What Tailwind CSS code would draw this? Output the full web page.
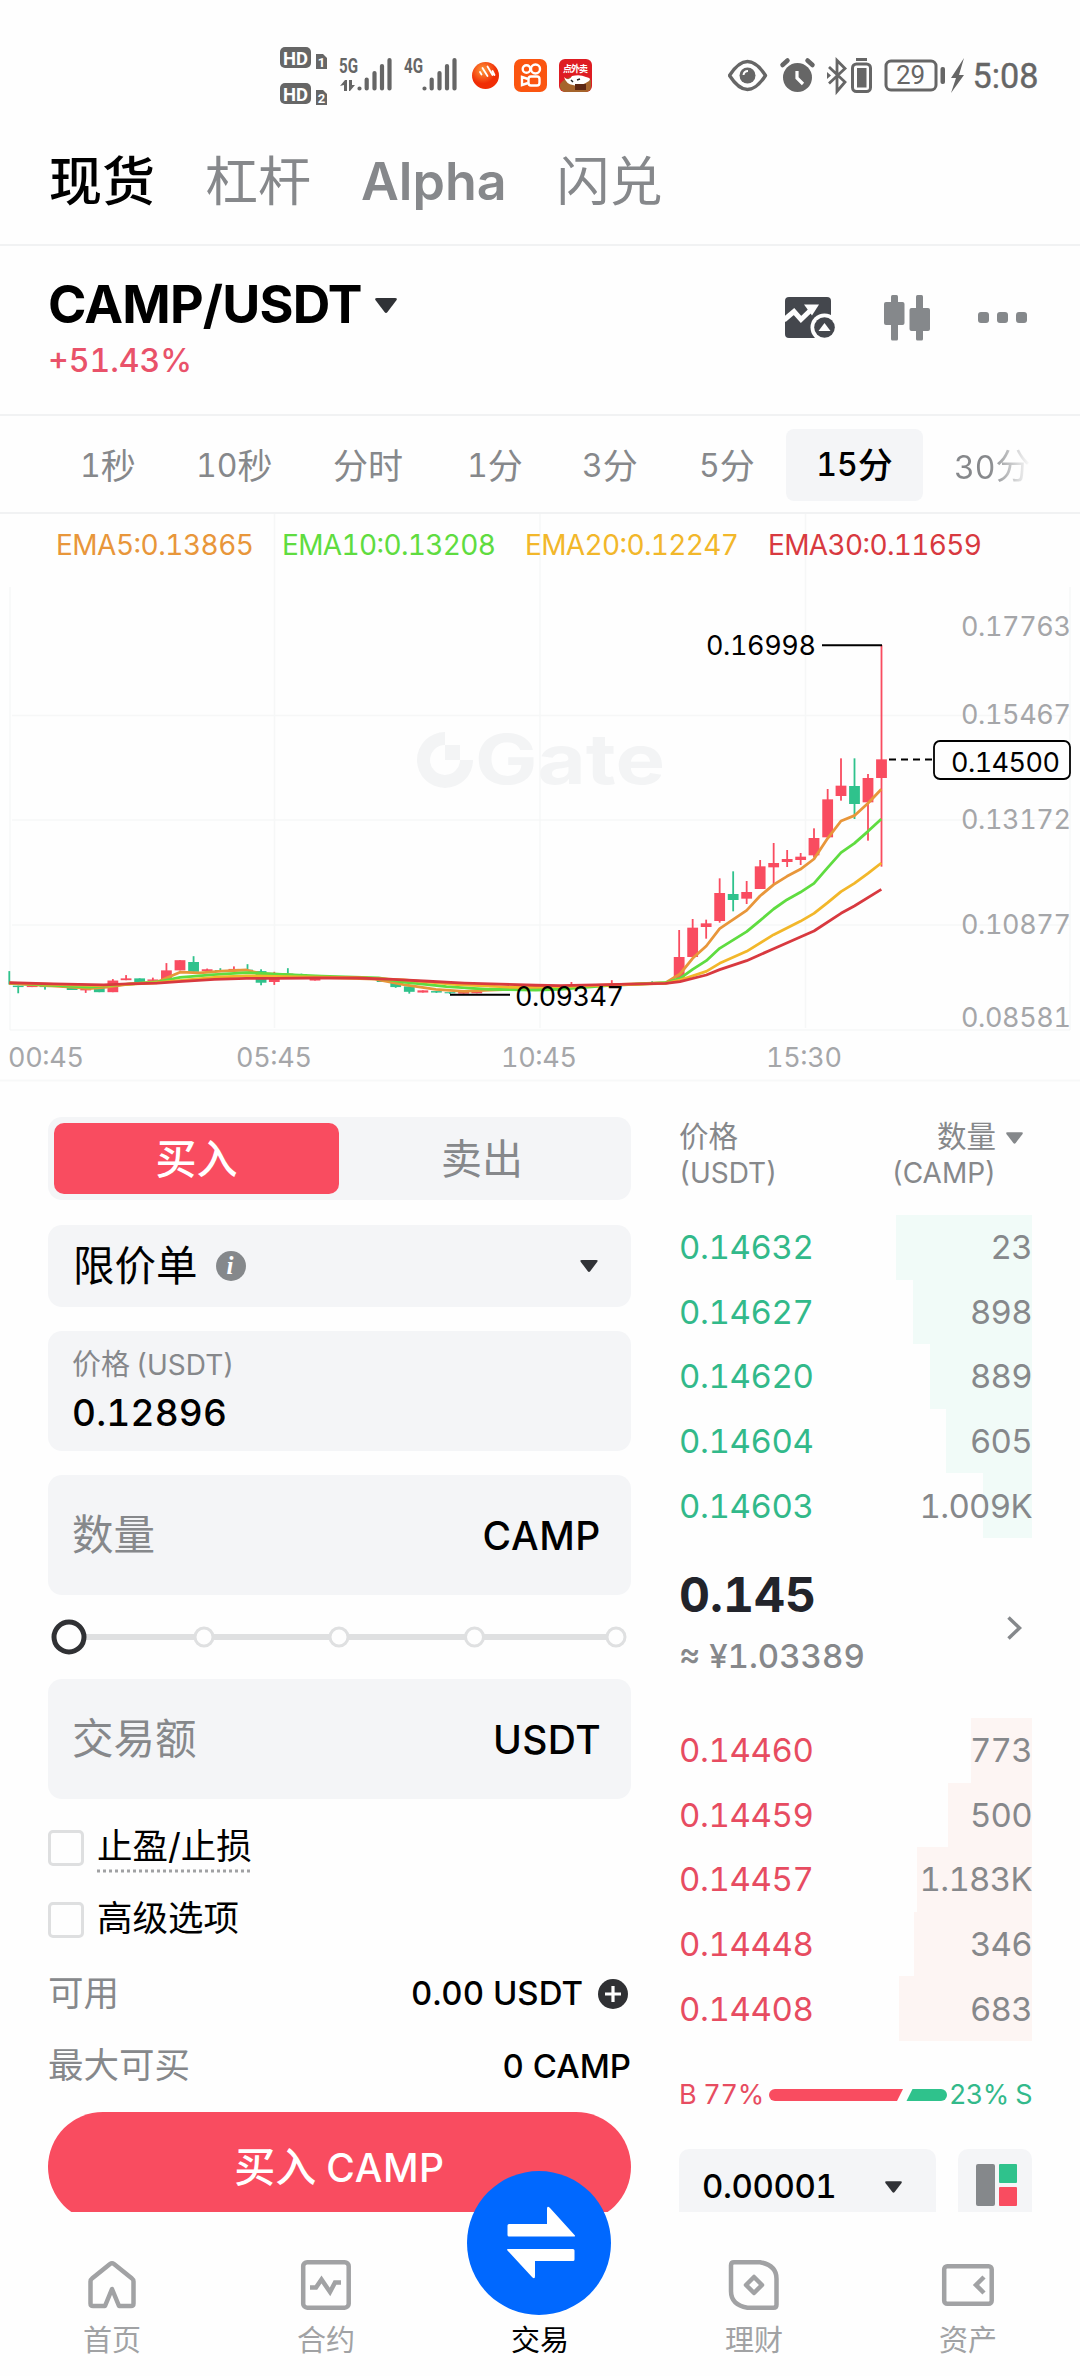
<!DOCTYPE html>
<html lang="zh-CN">
<head>
<meta charset="utf-8">
<title>CAMP/USDT</title>
<script src="https://cdn.jsdelivr.net/npm/@tailwindcss/browser@4"></script>
</head>
<body class="bg-[#fefefe]">
<div class="w-[1080px] h-[2376px] overflow-hidden flex flex-col bg-[#fefefe] text-black tabular-nums leading-none whitespace-nowrap font-['Inter','Noto_Sans_CJK_SC',sans-serif]">

  <!-- status bar -->
  <header class="h-[118px] shrink-0 pt-8 pl-[280px] pr-[38px] flex items-center justify-between">
    <svg width="313" height="60" viewBox="280 45 313 60" fill="#666">
      <rect x="280" y="47" width="31" height="21" rx="5"/><rect x="280" y="83" width="31" height="21" rx="5"/>
      <path d="M316 54h7l4 4v11h-11z"/><path d="M316 90h7l4 4v11h-11z"/>
      <g fill="#fff" font-family="Roboto" font-weight="700" font-size="19">
        <text x="283" y="64.500" textLength="25" lengthAdjust="spacingAndGlyphs">HD</text><text x="283" y="100.500" textLength="25" lengthAdjust="spacingAndGlyphs">HD</text>
        <text x="317.800" y="67" font-size="13">1</text><text x="317.800" y="103" font-size="13">2</text>
      </g>
      <g font-family="Roboto" font-weight="700" font-size="20">
        <text x="339" y="72.500" textLength="19" lengthAdjust="spacingAndGlyphs">5G</text><text x="404" y="72.500" textLength="19" lengthAdjust="spacingAndGlyphs">4G</text>
      </g>
      <path d="M340 86l5-6h2v11h-3v-6zM349 80h3v5h3l-5 6h-1z"/>
      <g stroke="#666" stroke-width="4.200" stroke-linecap="round">
        <path d="M359.500 88.500v0M366.700 79.500v9M374.500 73v15.500M382 66v22.500M389.500 60v28.500"/>
        <path d="M424.500 88.500v0M431.700 79.500v9M439.500 73v15.500M447 66v22.500M454.500 60v28.500"/>
      </g>
      <defs><radialGradient id="o" cx=".4" cy=".3"><stop stop-color="#ff9a3c"/><stop offset="1" stop-color="#f02d05"/></radialGradient></defs>
      <circle cx="485.500" cy="75.500" r="13.500" fill="url(#o)"/>
      <path d="M480 72l1.500 2.500M482.500 68l5 8M487.500 66.500l5 8.500M492.500 71l2 4" stroke="#fff" stroke-width="1.800" stroke-linecap="round"/>
      <rect x="514" y="59" width="33" height="33" rx="7" fill="#fb5510"/>
      <g fill="none" stroke="#fff" stroke-width="2.400"><circle cx="526.500" cy="69" r="3.800"/><circle cx="535.500" cy="69" r="4.500"/><rect x="528.500" y="76.500" width="11" height="9" rx="2.500"/><path d="M528 79l-6-2v8l6-2"/></g>
      <rect x="559" y="59" width="33" height="33" rx="6" fill="#de1c22"/>
      <path d="M560 84q6-8 14-7t17 3v6q0 6-6 6h-19q-5 0-6-5z" fill="#a5642c"/>
      <path d="M564 77q5 5 8-1 8-2 14 1 6 1 3 4-9 6-16 4-7-1-9-8z" fill="#fff"/><rect x="575" y="84" width="11" height="6" fill="#5c2713"/>
      <path d="M571 80l2 2M580 79l-3 1" stroke="#222" stroke-width="1.500"/>
      <text x="563" y="71.500" fill="#fff" font-family="Noto Sans CJK SC" font-weight="700" font-size="9" textLength="25">点外卖</text>
    </svg>
    <svg width="314" height="44" viewBox="728 53 314 44" fill="#666">
      <path d="M729.500 75.500Q747.500 47.500 765.500 75.500Q747.500 103.500 729.500 75.500z" fill="none" stroke="#666" stroke-width="3.400" stroke-linejoin="round"/>
      <circle cx="747.500" cy="75.500" r="8"/><path d="M748 71q-4 0-4.500 4" fill="none" stroke="#fff" stroke-width="2"/>
      <circle cx="797.500" cy="77.500" r="14.500"/><path d="M797 71v7l6 6" fill="none" stroke="#fff" stroke-width="3.200"/>
      <path d="M782.500 65l5-4.500M812.500 65l-5-4.500" stroke="#666" stroke-width="4.500" stroke-linecap="round"/>
      <path d="M829 67l16 15-8 9.500V60.500l8 8-16 15" fill="none" stroke="#666" stroke-width="2.800"/><path d="M827 72l4 3.500-4 3.500z"/>
      <rect x="852.500" y="64" width="18" height="27.500" rx="4" fill="none" stroke="#666" stroke-width="3"/><rect x="857" y="68" width="9.500" height="19.500"/><rect x="856" y="58" width="11" height="3"/>
      <rect x="886" y="61" width="50" height="29" rx="5" fill="none" stroke="#666" stroke-width="3"/>
      <text x="896" y="84" font-family="Roboto" font-size="26" textLength="29">29</text>
      <rect x="940.500" y="67" width="4.500" height="17" rx="2"/>
      <path d="M964 58l-13 20h5l-5 15 13-18h-5z"/>
      <text x="972.500" y="88" font-family="Roboto" font-size="35" textLength="66" lengthAdjust="spacingAndGlyphs" stroke="#666" stroke-width=".4">5:08</text>
    </svg>
  </header>

  <!-- product tabs -->
  <nav class="h-[126px] shrink-0 flex items-center pt-[2px] pl-[49px] gap-[50px] text-[53px] text-[#86888b]">
    <span class="font-medium text-black">现货</span>
    <span>杠杆</span>
    <span class="font-semibold text-[52px]">Alpha</span>
    <span>闪兑</span>
  </nav>

  <!-- pair -->
  <section class="h-[170px] shrink-0 border-t-2 border-[#f1f2f3] flex justify-between pl-[48px] pr-[53px]">
    <div class="pt-[29px]">
      <div class="flex items-center h-[60px]">
        <h1 class="text-[52px] font-bold tracking-[-0.8px] w-[327px]">CAMP/USDT</h1>
        <svg width="22" height="15" viewBox="0 0 22 15" fill="#303236"><path d="M2 0h18q3 0 1.200 2.500l-8.700 11.500q-1.500 1.800-3 0L.8 2.500Q-1 0 2 0z"/></svg>
      </div>
      <div class="h-[52px] flex items-center text-[32px] font-medium text-[#e9526a]">+51.43%</div>
    </div>
    <div class="flex items-center h-[143px] gap-[48px]">
      <svg width="51" height="46" viewBox="785 295 51 46" fill="#44474d">
        <rect x="785" y="297" width="46" height="41" rx="4"/>
        <path d="M784 320l10-8.500 7 8 13-12.500" fill="none" stroke="#fefefe" stroke-width="5"/><path d="M804 304.500h15l-7 11z" fill="#fefefe"/>
        <circle cx="824.500" cy="327.500" r="14" fill="#fefefe"/><circle cx="824.500" cy="327.500" r="10.300"/><path d="M824.500 323l6 8h-12z" fill="#fefefe"/>
      </svg>
      <svg width="46" height="46" viewBox="0 0 46 46" fill="#85888b"><rect x="7" width="7" height="45.500" rx="1.500"/><rect y="7" width="20.500" height="23" rx="2"/><rect x="32" width="7" height="45.500" rx="1.500"/><rect x="25.500" y="13" width="20.500" height="23" rx="2"/></svg>
      <div class="flex gap-2"><i class="w-[11px] h-[11px] rounded-[3px] bg-[#85888b]"></i><i class="w-[11px] h-[11px] rounded-[3px] bg-[#85888b]"></i><i class="w-[11px] h-[11px] rounded-[3px] bg-[#85888b]"></i></div>
    </div>
  </section>

  <!-- intervals -->
  <section class="h-[98px] shrink-0 border-t-2 border-[#f1f2f3] pl-[48px] pt-[13px] flex text-[35px] text-[#86888b]">
    <span class="w-[116px] h-[74px] flex items-center pl-[32px]"><b class="font-normal text-[32px]">1</b>秒</span>
    <span class="w-[137px] h-[74px] flex items-center pl-[32px]"><b class="font-normal text-[32px]">10</b>秒</span>
    <span class="w-[134px] h-[74px] flex items-center pl-[32px]">分时</span>
    <span class="w-[115px] h-[74px] flex items-center pl-[32px]"><b class="font-normal text-[32px]">1</b>分</span>
    <span class="w-[117px] h-[74px] flex items-center pl-[32px]"><b class="font-normal text-[32px]">3</b>分</span>
    <span class="w-[119px] h-[74px] flex items-center pl-[32px]"><b class="font-normal text-[32px]">5</b>分</span>
    <span class="w-[137px] h-[72px] flex items-center justify-center rounded-lg bg-[#f4f5f7] text-black font-medium"><b class="font-medium text-[32px]">15</b>分</span>
    <span class="h-[74px] flex items-center pl-[31px]"><span class="bg-linear-to-r from-[#86888b] from-45% to-[#86888b00] bg-clip-text text-transparent"><b class="font-normal text-[32px]">30</b>分</span></span>
  </section>

  <!-- candlestick chart -->
  <section class="h-[570px] shrink-0">
    <svg width="1080" height="570" viewBox="0 512 1080 570" font-family="Inter" font-size="27">
      <path d="M0 513h1080" stroke="#f1f2f3" stroke-width="2"/><path d="M0 1080.500h1080" stroke="#f7f8f8" stroke-width="2"/>
      <path d="M10 587v443M274.500 514v514M540 514v514M805.500 514v514M1070 587v443M12 715.500h1058M12 820h1058M12 925h1058M10 1030h1060" stroke="#f6f7f7" stroke-width="1.500"/>
      <g fill="#f3f4f5">
        <path d="M445 732a28 28 0 1 0 28 28h-13a15 15 0 1 1-15-15z"/><rect x="445" y="745" width="15" height="15"/>
        <text x="475" y="784" font-weight="700" font-size="69" textLength="190" lengthAdjust="spacingAndGlyphs">Gate</text>
      </g>
      <g font-size="28">
        <text x="56" y="555" fill="#e8963a" textLength="198">EMA5:0.13865</text>
        <text x="282" y="555" fill="#5fdc40" textLength="214">EMA10:0.13208</text>
        <text x="525" y="555" fill="#f2b72a" textLength="214">EMA20:0.12247</text>
        <text x="768" y="555" fill="#d8393f" textLength="214">EMA30:0.11659</text>
      </g>
      <g fill="#a5a6a9">
        <text x="961" y="635.500" textLength="110">0.17763</text><text x="961" y="723.500" textLength="110">0.15467</text><text x="961" y="828.500" textLength="110">0.13172</text><text x="961" y="933.500" textLength="110">0.10877</text><text x="961" y="1026.500" textLength="110">0.08581</text>
        <text x="8" y="1067" textLength="76">00:45</text><text x="236" y="1067" textLength="76">05:45</text><text x="501" y="1067" textLength="76">10:45</text><text x="766" y="1067" textLength="76">15:30</text>
      </g>
      <g id="candles"></g>
      <g fill="none" stroke-width="2.800" stroke-linejoin="round" id="lines"></g>
      <path d="M822 645.300h60M450 994.800h60" stroke="#000" stroke-width="2"/>
      <path d="M889 759.500h44" stroke="#000" stroke-width="2" stroke-dasharray="7 5"/>
      <rect x="934" y="741" width="136" height="38" rx="6" fill="#fefefe" stroke="#000" stroke-width="1.800"/>
      <text x="951" y="771.500" textLength="109">0.14500</text>
      <text x="706" y="654.500" textLength="110">0.16998</text>
      <text x="515" y="1006" textLength="109">0.09347</text>
    </svg>
  </section>

  <!-- order form + book -->
  <main class="h-[1130px] shrink-0 overflow-hidden flex pl-[48px] pr-[48px] pt-[35px]">
    <div class="w-[583px] shrink-0">
      <div class="h-[83px] rounded-[14px] bg-[#f4f5f7] pl-[6px] py-[6px] flex text-[41px]">
        <div class="w-[285px] rounded-[10px] bg-[#f94c60] text-white font-medium flex items-center justify-center pt-[2px]">买入</div>
        <div class="flex-1 text-[#86888b] flex items-center justify-center pt-[2px] pr-[6px]">卖出</div>
      </div>
      <div class="mt-[25px] h-[82px] rounded-[14px] bg-[#f4f5f7] flex items-center pl-[25px] pr-[33px]">
        <span class="text-[41.500px] font-normal pt-[2px]">限价单</span>
        <svg class="ml-[18px]" width="30" height="30" viewBox="0 0 30 30"><circle cx="15" cy="15" r="15" fill="#85888b"/><text x="10.500" y="23" font-family="Liberation Serif" font-style="italic" font-weight="700" font-size="25" fill="#fff">i</text></svg>
        <svg class="ml-auto" width="18" height="12" viewBox="0 0 22 15" fill="#303236"><path d="M2 0h18q3 0 1.200 2.500l-8.700 11.500q-1.500 1.800-3 0L.8 2.500Q-1 0 2 0z"/></svg>
      </div>
      <div class="mt-6 h-[120px] rounded-[14px] bg-[#f4f5f7] pl-[24px]">
        <div class="h-[65px] flex items-center pt-[2px] text-[29px] text-[#86888b]">价格<span class="text-[28px] ml-[6px]">(USDT)</span></div>
        <div class="h-[33px] flex items-center text-[37px] font-medium tracking-[0.2px]">0.12896</div>
      </div>
      <div class="mt-6 h-[120px] rounded-[14px] bg-[#f4f5f7] pl-[24px] pr-[30px] flex items-center justify-between">
        <span class="text-[41.500px] text-[#86888b] pt-[2px]">数量</span><span class="text-[39px] font-medium tracking-[0.6px]">CAMP</span>
      </div>
      <svg class="block" width="583" height="84" viewBox="48 1595 583 84">
        <path d="M69 1637h547" stroke="#dfe0e1" stroke-width="6"/>
        <g fill="#fefefe" stroke="#dfe0e1" stroke-width="3"><circle cx="204" cy="1637" r="9"/><circle cx="339" cy="1637" r="9"/><circle cx="474.500" cy="1637" r="9"/><circle cx="616" cy="1637" r="9"/></g>
        <circle cx="69" cy="1637" r="15" fill="#fefefe" stroke="#303134" stroke-width="5"/>
      </svg>
      <div class="h-[120px] rounded-[14px] bg-[#f4f5f7] pl-[24px] pr-[30px] flex items-center justify-between">
        <span class="text-[41.500px] text-[#86888b] pt-[2px]">交易额</span><span class="text-[39px] font-medium tracking-[0.4px]">USDT</span>
      </div>
      <div class="mt-[12px] h-[73px] flex items-center text-[35.500px]">
        <i class="w-[36px] h-[36px] rounded-[5px] border-[3px] border-[#dedfe0]"></i>
        <span class="relative ml-[13px] -mt-0.5">止盈/止损<svg class="absolute left-0 top-[40px]" width="154" height="4"><path d="M0 2h154" stroke="#a0a1a3" stroke-width="3" stroke-dasharray="3 3"/></svg></span>
      </div>
      <div class="h-[72px] flex items-center text-[35.500px]">
        <i class="w-[36px] h-[36px] rounded-[5px] border-[3px] border-[#dedfe0]"></i><span class="ml-[13px] -mt-0.5">高级选项</span>
      </div>
      <div class="h-[73px] flex items-center pt-[2px] text-[35.500px] text-[#86888b]">
        可用<span class="ml-auto text-[33px] font-medium text-black">0.00 USDT</span>
        <svg class="ml-[15px] mr-[3px]" width="30" height="30" viewBox="0 0 30 30"><circle cx="15" cy="15" r="15" fill="#303134"/><path d="M15 7v16M7 15h16" stroke="#fff" stroke-width="3.200"/></svg>
      </div>
      <div class="h-[72px] flex items-center pt-[2px] text-[35.500px] text-[#86888b]">最大可买<span class="ml-auto text-[33px] font-medium text-black">0 CAMP</span></div>
      <div class="mt-[11px] h-[110px] rounded-full bg-[#f94c60] text-white text-[41px] font-medium flex items-center justify-center gap-[10px]">买入<span class="text-[39px] tracking-[0.6px]">CAMP</span></div>
    </div>

    <div class="ml-[48px] w-[353px] shrink-0 text-[33px] text-[#86888b]">
      <div class="flex justify-between text-[28px] leading-[37px] pt-px">
        <div><div class="text-[29.500px]">价格</div><div>(USDT)</div></div>
        <div class="flex pr-[9px]">
          <div class="text-right"><div class="text-[29.500px]">数量</div><div>(CAMP)</div></div>
          <svg class="ml-[10px] mt-[14px]" width="17" height="12" viewBox="0 0 22 15" fill="#85888b"><path d="M2 0h18q3 0 1.200 2.500l-8.700 11.500q-1.500 1.800-3 0L.8 2.500Q-1 0 2 0z"/></svg>
        </div>
      </div>
      <div class="mt-[23px] text-[#32b98a]" id="asks"></div>
      <div class="h-[180px] flex items-center justify-between">
        <div class="-mt-[5px]"><div class="h-[62px] flex items-center text-[48px] font-bold text-[#22242b]">0.145</div><div class="h-[60px] flex items-center font-medium">≈ ¥1.03389</div></div>
        <svg class="mr-[10px]" width="15" height="24" viewBox="0 0 15 24" fill="none" stroke="#85888b" stroke-width="3.500"><path d="M1.500 1.500L12.500 12 1.500 22.500"/></svg>
      </div>
      <div class="text-[#e74c61]" id="bids"></div>
      <div class="h-[108px] flex items-center justify-between text-[27px] tracking-[-0.3px]">
        <span class="text-[#e74c61]">B 77%</span>
        <svg class="ml-[3px]" width="178" height="12" viewBox="0 0 178 12"><path d="M6 0h128l-6 12H6a6 6 0 0 1 0-12z" fill="#f94c60"/><path d="M143.500 0h28.500a6 6 0 0 1 0 12h-34.500z" fill="#2fc28c"/></svg>
        <span class="text-[#32b98a] tracking-[-0.6px]">23% S</span>
      </div>
      <div class="flex gap-[22px]">
        <div class="w-[257px] h-[76px] rounded-[10px] bg-[#f4f5f7] flex items-center justify-between pl-[23px] pr-[34px] font-medium tracking-[-0.4px] text-black">0.00001
          <svg width="17" height="12" viewBox="0 0 22 15" fill="#303236"><path d="M2 0h18q3 0 1.200 2.500l-8.700 11.500q-1.500 1.800-3 0L.8 2.500Q-1 0 2 0z"/></svg></div>
        <div class="w-[74px] h-[76px] rounded-[10px] bg-[#f4f5f7] pl-[18px] pt-[15px]">
          <svg width="41" height="42"><rect width="19" height="42" rx="2" fill="#85888b"/><rect x="23" width="18" height="19" rx="1" fill="#2fc28c"/><rect x="23" y="23" width="18" height="19" rx="1" fill="#f94c60"/></svg>
        </div>
      </div>
    </div>
  </main>

  <!-- bottom navigation -->
  <footer class="relative h-[164px] shrink-0 bg-[#fefefe] px-[5px] grid grid-cols-5 justify-items-center text-[29px] text-[#a1a2a4]">
    <div class="pt-[46px] flex flex-col items-center"><svg width="52" height="54" viewBox="86 2258 52 54" fill="none" stroke="#a1a2a4" stroke-width="4.500" stroke-linejoin="round"><path d="M105 2306h-12q-2.500 0-2.500-2.500v-22q0-2 1.500-3l18-14.500q2-1.500 4 0l18 14.500q1.500 1 1.500 3v22q0 2.500-2.500 2.500h-12l-7-17z"/></svg><span class="mt-[14px]">首页</span></div>
    <div class="pt-[46px] flex flex-col items-center"><svg width="52" height="54" viewBox="299 2258 52 54" fill="none" stroke="#a1a2a4" stroke-width="4.500"><rect x="302.200" y="2262.200" width="45.500" height="45.500" rx="4"/><path d="M309 2287.500h6l5.500-8 8.500 12.500 5-9.500h6" stroke-width="4.500"/></svg><span class="mt-[14px]">合约</span></div>
    <div class="pt-[114px] text-black">交易</div>
    <div class="pt-[46px] flex flex-col items-center"><svg width="52" height="54" viewBox="727 2258 52 54" fill="none" stroke="#a1a2a4" stroke-width="4.500" stroke-linejoin="round"><path d="M733 2262.200h26q16.500 3 16.500 16.500v26q0 3-3 3h-26q-16.500-3-16.500-16.500v-26q0-3 3-3z"/><path d="M753 2277l8 8-8 8-8-8z"/></svg><span class="mt-[14px]">理财</span></div>
    <div class="pt-[46px] flex flex-col items-center"><svg width="54" height="54" viewBox="940 2258 54 54" fill="none" stroke="#a1a2a4" stroke-width="4.500"><rect x="943.200" y="2266.200" width="47.500" height="37.500" rx="3"/><path d="M983 2277l-8 8 8 8"/></svg><span class="mt-[14px]">资产</span></div>
    <div class="absolute left-[467px] -top-[41px] w-[144px] h-[144px] rounded-full bg-[#0068ff]">
      <svg width="144" height="144" viewBox="467 2171 144 144" fill="#fff"><path d="M509 2224h38v-15q0-4 3-1l24.500 27q1.500 1.500-1 1.500h-64.500q-1.500 0-1.500-1.500v-9.500q0-1.500 1.500-1.500zM573 2261h-38v15q0 4-3 1l-24.500-26.500q-1.500-1.500 1-1.500h64.500q1.500 0 1.500 1.500v9q0 1.500-1.500 1.500z"/></svg>
    </div>
  </footer>
</div>

<script>
const UP = '#f94c60', DOWN = '#2fc28c';
// [x, bodyTop, bodyBottom, high, low, falling]
const early = [[26,1300,1302,1268,1305,1],[51,1308,1312,1308,1329,1],[90,1308,1312,1308,1312,0],[126,1308,1312,1308,1319,1],[202,1314,1320,1314,1320,1],[240,1317,1321,1312,1328,0],[278,1310,1326,1310,1326,1],[316,1294,1326,1290,1326,0],[353,1288,1293,1279,1293,0],[391,1288,1298,1288,1298,1],[428,1291,1295,1286,1295,0],[466,1266,1290,1246,1290,0],[504,1238,1266,1238,1266,0],[542,1243,1270,1227,1270,1],[580,1263,1268,1261,1268,0],[617,1265,1268,1260,1270,1],[655,1262,1266,1255,1266,0],[693,1264,1268,1249,1268,1],[731,1268,1300,1263,1307,1],[768,1285,1298,1270,1306,0],[806,1275,1278,1260,1280,1],[844,1276,1280,1275,1280,1],[882,1289,1294,1289,1294,0],[1070,1294,1298,1294,1298,1],[1108,1298,1312,1298,1314,1],[1146,1310,1325,1310,1330,1],[1184,1321,1327,1321,1327,0],[1222,1323,1327,1323,1328,1],[1260,1326,1329,1326,1331,1],[1298,1325,1330,1325,1330,0],[1335,1324,1329,1324,1329,0],[1600,1304,1306,1298,1308,0],[1713,1304,1306,1293,1308,0],[1826,1298,1300,1296,1300,1]]
  .map(([x,...r]) => [x/2.8, ...r.slice(0,4).map(v => 510+v/2.75), r[4]]);
const late = [[117.5,1011,1075,930,1075,0],[158,923,1011,897,1011,0],[198.5,910,921,899,956,0],[239,819,903,775,908,0],[279.5,822,840,754,874,1],[320,816,836,783,852,0],[360.5,739,807,720,807,0],[401,729,742,669,792,0],[441.500,717,726,690,741,0],[482,710,720,699,735,0],[522,654,706,625,712,0],[563,538,652,507,652,0],[603,497,528,415,542,0],[643.500,498,552,415,597,1],[684,474,547,462,662,0],[724.500,418,474,75,740,0]]
  .map(([x,...r]) => [640+x/3, ...r.slice(0,4).map(v => 620+v/3), r[4]]);
document.getElementById('candles').innerHTML = [...early, ...late].map(([x,t,b,h,l,d]) => {
  const c = d ? DOWN : UP, thin = x < 12 || b - t < 0.9;
  return `<rect x="${x-.9}" y="${h}" width="1.8" height="${l-h}" fill="${c}"/>` + (thin ? '' : `<rect x="${x-5.4}" y="${t}" width="10.8" height="${b-t}" fill="${c}"/>`);
}).join('');
const ema = [
  ['#e8963a', [26,1302,200,1312,250,1316,300,1312,360,1304,440,1298,504,1271,560,1273,620,1268,690,1265,730,1275,800,1278,900,1285,1050,1290,1130,1305,1220,1318,1300,1324,1370,1320,1500,1316,1650,1308,1864,1300],
    [120,1062,158,1015,199,978,239,926,279,899,320,871,360,828,401,794,441,769,481,748,522,717,563,655,603,603,643,587,684,550,724,508]],
  ['#5fdc40', [26,1301,250,1312,360,1304,440,1298,504,1285,600,1278,690,1272,760,1276,900,1282,1060,1287,1130,1298,1250,1311,1370,1318,1500,1320,1568,1318,1700,1308,1864,1300],
    [120,1075,158,1048,199,1022,239,985,320,935,360,902,401,867,441,839,481,817,522,790,563,743,603,698,643,670,684,634,724,597]],
  ['#f2b72a', [26,1301,280,1308,440,1300,600,1285,690,1281,800,1283,1000,1286,1130,1292,1280,1305,1450,1313,1600,1310,1864,1302],
    [120,1080,199,1054,239,1030,320,994,401,944,481,904,522,880,563,848,603,815,643,790,684,760,724,729]],
  ['#d8393f', [26,1300,150,1303,290,1306,360,1303,440,1301,500,1297,600,1291,690,1288,770,1288,880,1287,1000,1287,1100,1291,1200,1296,1300,1301,1400,1304,1500,1307,1568,1308,1700,1305,1864,1302],
    [120,1085,199,1065,239,1049,320,1022,401,986,481,951,522,933,603,880,643,858,724,808]]
];
const pts = (a, f) => a.reduce((s, v, i) => s + (i % 2 ? f(a[i-1], v) + ' ' : ''), '');
document.getElementById('lines').innerHTML = ema.map(([c, a, b]) =>
  `<polyline stroke="${c}" points="${pts(a,(x,y)=>x/2.8+','+(510+y/2.75))}${pts(b,(x,y)=>(640+x/3)+','+(620+y/3))}"/>`).join('');

const row = (tint) => ([p, q, w]) => `<div class="relative h-[64.600px] pt-px flex items-center justify-between tracking-[-0.4px]"><i class="absolute right-0 inset-y-0 ${tint}" style="width:${w}px"></i><span class="relative">${p}</span><span class="relative tracking-[-0.7px] text-[#86888b]">${q}</span></div>`;
document.getElementById('asks').innerHTML = [['0.14632','23',136],['0.14627','898',119],['0.14620','889',102],['0.14604','605',86],['0.14603','1.009K',49]].map(row('bg-[#f1fbf8]')).join('');
document.getElementById('bids').innerHTML = [['0.14460','773',61],['0.14459','500',84],['0.14457','1.183K',115],['0.14448','346',118],['0.14408','683',133]].map(row('bg-[#fdf5f3]')).join('');
</script>
</body>
</html>
